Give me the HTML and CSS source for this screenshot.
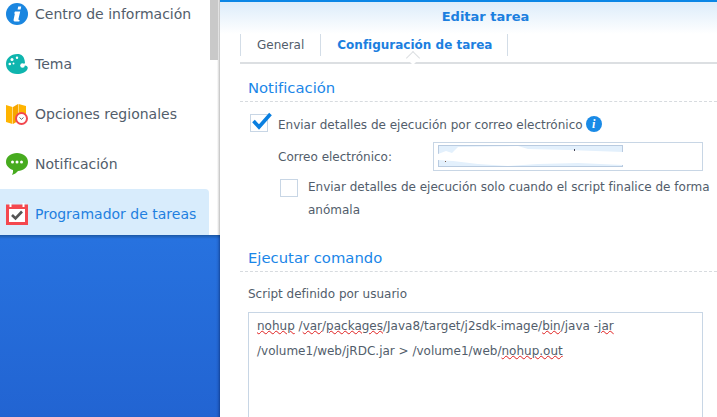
FILE: index.html
```html
<!DOCTYPE html>
<html lang="es">
<head>
<meta charset="utf-8">
<title>Editar tarea</title>
<link rel="stylesheet" href="styles.css">
</head>
<body>
<div class="page">
  <aside class="side">
    <nav class="menu">
      <ul class="menu-list">
        <li class="menu-item">
          <svg class="menu-icon" viewBox="0 0 22 22"><circle cx="11" cy="11" r="11" fill="#1a86e0"/><path d="M12.200 3.600h3l-.6 2.800h-3zM9 8.600h5.200l-1.800 7.600q-.2 1 1.200.8l-.3 1.500H8.800q-1.600 0-1.200-1.700l1.300-6.300H8z" fill="#fff"/></svg>
          <span>Centro de información</span>
        </li>
        <li class="menu-item">
          <svg class="menu-icon" viewBox="0 0 22 22"><path d="M11.500 1C4.500 1 0 5.500 0 11s4.500 10 11 10c5 0 9-1.500 10.500-5 .8-2-.5-3.500-2.500-3.500-1.500 0-1.500-1.500 0-2.500C18.500 3 15.500 1 11.500 1z" fill="#0fb5ae"/><circle cx="6" cy="6.500" r="1.500" fill="#fff"/><circle cx="11" cy="4.800" r="1.200" fill="#fff"/><circle cx="3.800" cy="11" r="1.300" fill="#fff"/><circle cx="7.500" cy="10.500" r="1" fill="#fff"/><circle cx="16.500" cy="12.500" r="2.300" fill="#fff"/></svg>
          <span>Tema</span>
        </li>
        <li class="menu-item">
          <svg class="menu-icon" viewBox="0 0 22 22"><path d="M0 2l6.500 2v17L0 19z" fill="#ffb400"/><path d="M7 4l5-3v17l-5 3z" fill="#f7a600"/><path d="M12.500 1l7.500 2v9h-7.500z" fill="#ffb400"/><circle cx="15.500" cy="15.500" r="5.500" fill="#fff" stroke="#f2484f" stroke-width="2"/><path d="M13.500 14.500l2 1.800 2-1.800" fill="none" stroke="#666" stroke-width="1"/></svg>
          <span>Opciones regionales</span>
        </li>
        <li class="menu-item">
          <svg class="menu-icon" viewBox="0 0 22 22"><path d="M11 0c6 0 11 3.500 11 9s-5 9-10 9c-1.500 1.800-3.500 3.300-6 4 .8-1.500 1.200-3 1-5C3 15.500 0 12.800 0 9c0-5.500 5-9 11-9z" fill="#47ab1f"/><circle cx="6.500" cy="9" r="1.500" fill="#fff"/><circle cx="11" cy="9" r="1.500" fill="#fff"/><circle cx="15.500" cy="9" r="1.500" fill="#fff"/></svg>
          <span>Notificación</span>
        </li>
        <li class="menu-item is-active">
          <svg class="menu-icon" viewBox="0 0 22 22"><rect x="0" y="1.500" width="22" height="20.500" fill="#f4484f"/><rect x="3.500" y="0" width="2" height="4" fill="#fff"/><rect x="16.500" y="0" width="2" height="4" fill="#fff"/><rect x="3" y="6" width="16" height="13" fill="#fff"/><path d="M6 12l3.500 3.500L16 8.500" fill="none" stroke="#555" stroke-width="2.600"/></svg>
          <span>Programador de tareas</span>
        </li>
      </ul>
      <div class="scrollbar"></div>
    </nav>
    <div class="desktop"></div>
  </aside>
  <main class="panel">
    <header class="panel-head">Editar tarea</header>
    <div class="tabs">
      <span class="tab">General</span>
      <span class="tab tab-on">Configuración de tarea</span>
    </div>
    <section class="block">
      <h2 class="block-title">Notificación</h2>
      <div class="check-row">
        <span class="box">
          <svg class="tick" viewBox="0 0 20 18"><path d="M1.500 9l5.500 6L18.500 2" fill="none" stroke="#0a7fe0" stroke-width="3.600"/></svg>
        </span>
        <span class="check-text">Enviar detalles de ejecución por correo electrónico</span>
        <span class="info">i</span>
      </div>
      <div class="mail-row">
        <label class="mail-label">Correo electrónico:</label>
        <div class="mail-input">
          <svg class="mail-blur" viewBox="0 0 190 22"><rect x=".5" y=".5" width="184" height="21" fill="#e3f0fc" stroke="#b9cbe0"/><path d="M0 9l8-3 6 2 6-6 60-1 10 3 40 1 55 2v13l-45-2-40 1-30 2-30-2-25-3-15-1z" fill="#fff"/><rect x="136" y="4" width="1" height="2" fill="#445"/><rect x="7" y="16" width="1" height="1" fill="#754"/></svg>
        </div>
      </div>
      <div class="check-row check-sub">
        <span class="box"></span>
        <span class="check-long">Enviar detalles de ejecución solo cuando el script finalice de forma anómala</span>
      </div>
    </section>
    <section class="block block-cmd">
      <h2 class="block-title">Ejecutar comando</h2>
      <div class="script-label">Script definido por usuario</div>
      <div class="script-box">
        <span class="err">nohup</span> /<span class="err">var</span>/<span class="err">packages</span>/Java8/target/j2sdk-image/<span class="err">bin</span>/java -<span class="err">jar</span><br>
        /volume1/web/jRDC.jar &gt; /volume1/web/<span class="err">nohup.out</span>
      </div>
    </section>
  </main>
</div>
</body>
</html>
```
FILE: styles.css
```css
* { box-sizing: border-box; }
html, body { margin: 0; height: 100%; }
body {
  overflow: hidden;
  background: #fff;
  font-family: "DejaVu Sans", Verdana, sans-serif;
  font-size: 12px;
  color: #525d6b;
}
.page { display: flex; width: 717px; height: 417px; overflow: hidden; }

.side { flex: 0 0 220px; display: flex; flex-direction: column; }
.menu {
  position: relative;
  height: 235px;
  flex: none;
  overflow: hidden;
  background: linear-gradient(to right, #fff 217px, #d9d9d9 219px, #bdbdbd);
}
.menu-list { list-style: none; margin: -11px 0 0; padding: 0; width: 209px; }
.menu-item {
  display: flex;
  align-items: center;
  gap: 7px;
  height: 50px;
  padding-left: 6px;
  font-size: 14px;
}
.is-active {
  background: #d8ecfc;
  border-top-right-radius: 4px;
  color: #1f80e0;
}
.menu-icon { width: 22px; height: 22px; flex: none; }
.scrollbar {
  position: absolute;
  top: 0;
  left: 210px;
  width: 8px;
  height: 60px;
  background: #c9c9c9;
}
.desktop {
  flex: 1;
  background: linear-gradient(to bottom, #1d5aa8 0, #2772df 4px, #2264d2 100%);
  box-shadow: inset -3px 0 3px -2px rgba(0, 20, 70, .5);
}

.panel { flex: 1; min-width: 0; border-top: 2px solid #0a86e6; }
.panel-head {
  height: 32px;
  padding: 7px 0 0 34px;
  text-align: center;
  font-size: 13px;
  font-weight: 700;
  color: #1c7fdf;
  background: linear-gradient(to bottom, #dcecfa, #fff);
}
.tabs {
  position: relative;
  display: flex;
  margin-left: 20px;
  height: 30px;
  padding-bottom: 6px;
  border-bottom: 2px solid #dcdfe2;
}
.tabs::after {
  content: "";
  position: absolute;
  left: 168px;
  bottom: -2px;
  width: 9px;
  height: 9px;
  transform: translateY(-1px) rotate(45deg);
  background: #fff;
  border-left: 1px solid #dcdfe2;
  border-top: 1px solid #dcdfe2;
}
.tab {
  display: flex;
  align-items: center;
  padding: 0 16px;
  font-size: 12px;
  border-left: 1px solid #d3dde7;
}
.tab-on {
  font-weight: 700;
  padding: 0 15px 0 16px;
  color: #1c7fdf;
  border-right: 1px solid #d3dde7;
}

.block { margin-left: 20px; }
.block-title {
  margin: 0;
  height: 38px;
  padding: 14px 0 0 8px;
  font-size: 14.800px;
  line-height: 20px;
  font-weight: 400;
  color: #1a86e8;
  border-bottom: 1px dashed #d7dbdf;
}
.check-row { display: flex; align-items: center; margin: 12px 0 0 10px; gap: 10px; }
.check-text { padding-top: 3px; }
.box {
  position: relative;
  flex: none;
  width: 18px;
  height: 18px;
  background: #fff;
  border: 1px solid #c8d6e5;
}
.tick { position: absolute; left: 1px; top: -3px; width: 20px; height: 18px; }
.info {
  width: 16px;
  height: 16px;
  margin: 2px 0 0 -7px;
  border-radius: 50%;
  background: #1a8ae6;
  color: #fff;
  font: italic 700 12px/16px "Liberation Serif", serif;
  text-align: center;
}
.mail-row { display: flex; align-items: center; margin: 10px 0 0 38px; }
.mail-label { width: 155px; }
.mail-input { width: 270px; height: 29px; padding: 2px 4px; border: 1px solid #c8d6e5; }
.mail-blur { display: block; width: 190px; height: 22px; }
.check-sub { align-items: flex-start; margin: 8px 0 0 40px; gap: 10px; }
.check-long { line-height: 23px; width: 405px; margin-top: -3px; }
.block-cmd { margin-top: 12px; }
.script-label { margin: 14px 0 0 8px; line-height: 16px; }
.script-box {
  margin: 10px 0 0 8px;
  width: 455px;
  height: 120px;
  padding: 1px 8px;
  line-height: 25px;
  border: 1px solid #c8d6e5;
}
.err { text-decoration: underline wavy #e02020 1px; text-underline-offset: 0; }
```
